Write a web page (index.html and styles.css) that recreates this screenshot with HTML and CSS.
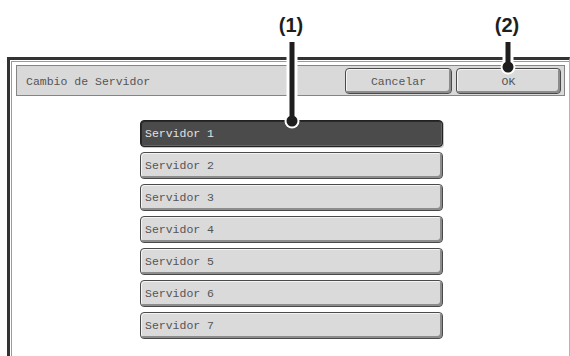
FILE: index.html
```html
<!DOCTYPE html>
<html lang="es">
<head>
  <meta charset="UTF-8" />
  <title>Cambio de Servidor</title>
  <link rel="stylesheet" href="styles.css">
</head>
<body>

  <div class="frame">
    <div class="frame-inner">
      <div class="title-bar">
        <span class="title">Cambio de Servidor</span>
        <div class="actions">
          <button class="key key-cancel">Cancelar</button>
          <button class="key key-ok">OK</button>
        </div>
      </div>

      <div class="server-list">
        <button class="server selected">Servidor 1</button>
        <button class="server">Servidor 2</button>
        <button class="server">Servidor 3</button>
        <button class="server">Servidor 4</button>
        <button class="server">Servidor 5</button>
        <button class="server">Servidor 6</button>
        <button class="server">Servidor 7</button>
      </div>
    </div>
  </div>

  <!-- callout labels over the panel -->
  <svg class="callouts" width="570" height="356" viewBox="0 0 570 356">
    <g class="halo">
      <line x1="292" y1="42" x2="292" y2="121" />
      <line x1="508" y1="42" x2="508" y2="67" />
      <circle cx="292" cy="121" r="7.5" />
      <circle cx="508" cy="67" r="7.5" />
    </g>
    <g class="pointer">
      <line x1="292" y1="42" x2="292" y2="121" />
      <line x1="508" y1="42" x2="508" y2="67" />
      <circle cx="292" cy="121" r="5.5" />
      <circle cx="508" cy="67" r="5.5" />
    </g>
    <text x="291" y="32">(1)</text>
    <text x="507" y="32">(2)</text>
  </svg>

</body>
</html>
```

FILE: styles.css
```css
* {
  box-sizing: border-box;
  margin: 0;
  padding: 0;
}

body {
  width: 570px;
  height: 356px;
  overflow: hidden;
  background: #fff;
  font-family: "Liberation Mono", "Courier New", monospace;
  color: #555;
  position: relative;
}

.frame {
  margin: 57px 0 0 7px;
  width: 563px;
  height: 299px;
  border-top: 3px solid #333;
  border-left: 3px solid #333;
  border-right: 1px solid #b5b5b5;
}

.frame-inner {
  margin: 1px 0 0 1px;
  height: 100%;
  border-top: 1px solid #9a9a9a;
  border-left: 1px solid #9a9a9a;
  padding: 3px 4px 0 4px;
}

.title-bar {
  height: 31px;
  display: flex;
  align-items: center;
  justify-content: space-between;
  background: #d9d9d9;
  border: 1px solid #858585;
  padding: 1px 3px 0 9px;
}

.title {
  font-size: 11.5px;
}

.actions {
  display: flex;
  gap: 4px;
}

.key,
.server {
  font-family: "Liberation Mono", "Courier New", monospace;
  font-size: 11.5px;
  color: #555;
  background: #dadada;
  border: 1px solid #4a4a4a;
  border-radius: 4px;
  box-shadow: inset 1px 1px 0 #f4f4f4, inset -2px -2px 0 #8c8c8c;
}

.key {
  height: 26px;
  text-align: center;
}

.key-cancel {
  width: 107px;
}

.key-ok {
  width: 105px;
}

.server-list {
  margin: 24px 0 0 124px;
  width: 303px;
  display: flex;
  flex-direction: column;
  gap: 5px;
}

.server {
  height: 27px;
  text-align: left;
  padding-left: 4px;
}

.server.selected {
  background: #4b4b4b;
  color: #e2e2e2;
  border-color: #222;
  box-shadow: inset 1px 1px 0 #2a2a2a, inset -1px -1px 0 #666, 1px 1px 0 #c8c8c8;
}

.callouts {
  position: absolute;
  left: 0;
  top: 0;
}

.halo line {
  stroke: #fff;
  stroke-width: 11;
}

.halo circle {
  fill: #fff;
}

.pointer line {
  stroke: #1e1e1e;
  stroke-width: 5;
}

.pointer circle {
  fill: #1e1e1e;
}

.callouts text {
  font-family: "Liberation Sans", Arial, sans-serif;
  font-weight: bold;
  font-size: 20px;
  fill: #1e1e1e;
  text-anchor: middle;
}
```
